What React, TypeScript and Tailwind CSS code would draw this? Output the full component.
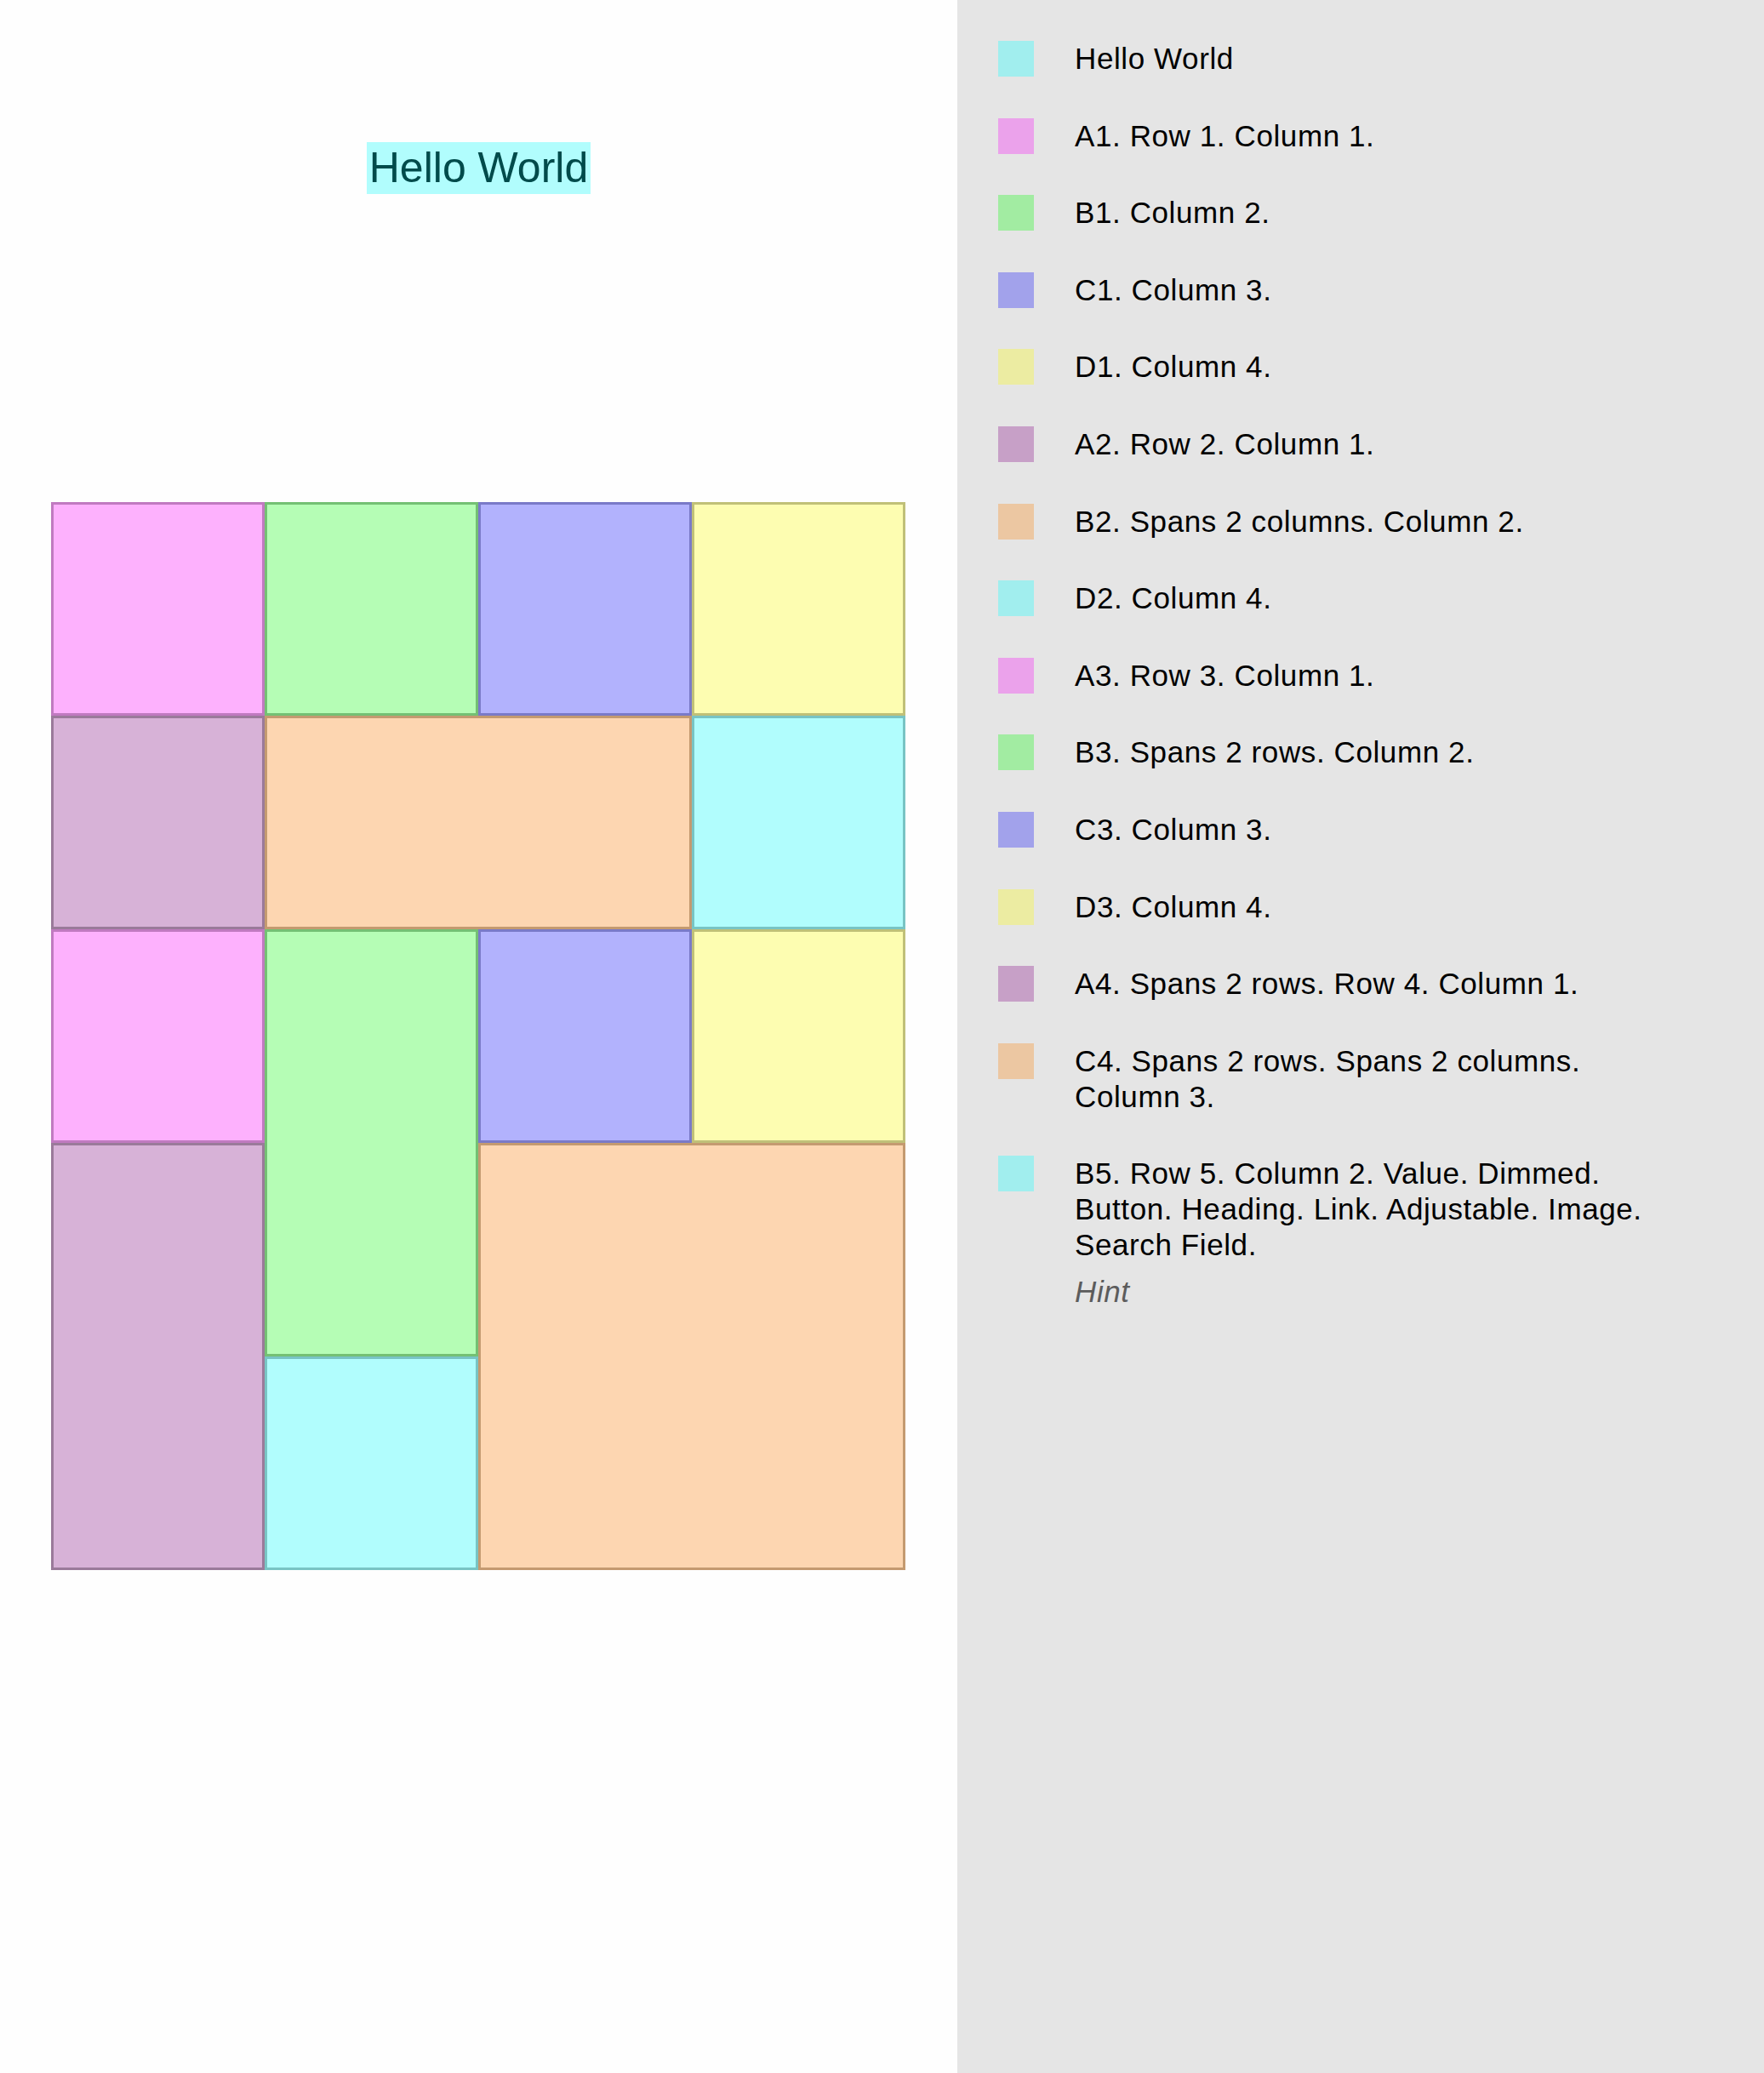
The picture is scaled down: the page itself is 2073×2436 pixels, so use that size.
import React from "react";

type Swatch = { fill: string; border: string; chip: string };

const palette: Record<string, Swatch> = {
  pink: { fill: "bg-[#fdb1fd]", border: "border-[#c07ac0]", chip: "bg-[#eba2eb]" },
  green: { fill: "bg-[#b5fdb5]", border: "border-[#74c074]", chip: "bg-[#a2eca2]" },
  blue: { fill: "bg-[#b2b2fd]", border: "border-[#7a7ac8]", chip: "bg-[#a2a2eb]" },
  yellow: { fill: "bg-[#fdfdb1]", border: "border-[#c0c078]", chip: "bg-[#ececa2]" },
  purple: { fill: "bg-[#d7b2d7]", border: "border-[#9a7a9a]", chip: "bg-[#c7a0c7]" },
  orange: { fill: "bg-[#fdd6b1]", border: "border-[#c49a70]", chip: "bg-[#ecc7a2]" },
  cyan: { fill: "bg-[#b1fdfd]", border: "border-[#78c4c4]", chip: "bg-[#a1eeee]" },
};

// grid cells in reading order
const cells: { id: string; color: string; place: string }[] = [
  { id: "A1", color: "pink", place: "col-start-1 row-start-1" },
  { id: "B1", color: "green", place: "col-start-2 row-start-1" },
  { id: "C1", color: "blue", place: "col-start-3 row-start-1" },
  { id: "D1", color: "yellow", place: "col-start-4 row-start-1" },
  { id: "A2", color: "purple", place: "col-start-1 row-start-2" },
  { id: "B2", color: "orange", place: "col-start-2 col-span-2 row-start-2" },
  { id: "D2", color: "cyan", place: "col-start-4 row-start-2" },
  { id: "A3", color: "pink", place: "col-start-1 row-start-3" },
  { id: "B3", color: "green", place: "col-start-2 row-start-3 row-span-2" },
  { id: "C3", color: "blue", place: "col-start-3 row-start-3" },
  { id: "D3", color: "yellow", place: "col-start-4 row-start-3" },
  { id: "A4", color: "purple", place: "col-start-1 row-start-4 row-span-2" },
  { id: "C4", color: "orange", place: "col-start-3 col-span-2 row-start-4 row-span-2" },
  { id: "B5", color: "cyan", place: "col-start-2 row-start-5" },
];

// each label is split into the lines the inspector wraps it to
const legend: { color: string; lines: string[]; hint?: string }[] = [
  { color: "cyan", lines: ["Hello World"] },
  { color: "pink", lines: ["A1. Row 1. Column 1."] },
  { color: "green", lines: ["B1. Column 2."] },
  { color: "blue", lines: ["C1. Column 3."] },
  { color: "yellow", lines: ["D1. Column 4."] },
  { color: "purple", lines: ["A2. Row 2. Column 1."] },
  { color: "orange", lines: ["B2. Spans 2 columns. Column 2."] },
  { color: "cyan", lines: ["D2. Column 4."] },
  { color: "pink", lines: ["A3. Row 3. Column 1."] },
  { color: "green", lines: ["B3. Spans 2 rows. Column 2."] },
  { color: "blue", lines: ["C3. Column 3."] },
  { color: "yellow", lines: ["D3. Column 4."] },
  { color: "purple", lines: ["A4. Spans 2 rows. Row 4. Column 1."] },
  { color: "orange", lines: ["C4. Spans 2 rows. Spans 2 columns.", "Column 3."] },
  {
    color: "cyan",
    lines: [
      "B5. Row 5. Column 2. Value. Dimmed.",
      "Button. Heading. Link. Adjustable. Image.",
      "Search Field.",
    ],
    hint: "Hint",
  },
];

export default function App() {
  return (
    <div className="flex h-[2436px] w-full font-['Liberation_Sans',Arial,sans-serif]">
      {/* Canvas */}
      <div className="w-[1125px] shrink-0 bg-[#fefefe] flex flex-col">
        <div className="flex justify-center pt-[167px]">
          <span className="bg-[#b1fdfd] text-[#004b4b] text-[50px] leading-[61px] px-[3px]">
            Hello World
          </span>
        </div>
        <div className="mt-[362px] pl-[60px]">
          <div className="grid grid-cols-[repeat(4,251px)] grid-rows-[repeat(5,251px)]">
            {cells.map((c) => (
              <div
                key={c.id}
                className={`${c.place} ${palette[c.color].fill} ${palette[c.color].border} border-[3px]`}
              />
            ))}
          </div>
        </div>
      </div>

      {/* Accessibility inspector list */}
      <div className="flex-1 bg-[#e5e5e5] pt-[48px] pl-[48px]">
        <div className="flex flex-col gap-[48.6px]">
          {legend.map((item) => (
            <div key={item.lines[0]} className="flex gap-[48px]">
              <div className={`w-[42px] h-[42px] shrink-0 ${palette[item.color].chip}`} />
              <div className="flex flex-col text-[35px] leading-[42px] tracking-[0.6px]">
                {item.lines.map((line) => (
                  <span key={line} className="text-black whitespace-nowrap">
                    {line}
                  </span>
                ))}
                {item.hint && (
                  <span className="mt-[13px] italic text-[#5c5c5c]">{item.hint}</span>
                )}
              </div>
            </div>
          ))}
        </div>
      </div>
    </div>
  );
}
